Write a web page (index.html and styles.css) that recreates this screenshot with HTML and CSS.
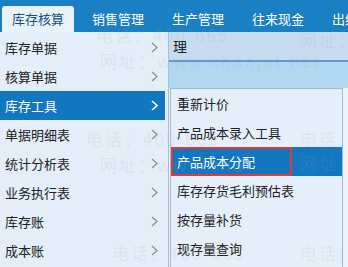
FILE: index.html
```html
<!DOCTYPE html>
<html lang="zh-CN">
<head>
  <meta charset="UTF-8">
  <title>库存核算</title>
  <link rel="stylesheet" href="styles.css">
</head>
<body>

  <div class="app">
    <!-- top navigation -->
    <div class="topbar">
      <div class="tab active">库存核算</div>
      <div class="tab">销售管理</div>
      <div class="tab">生产管理</div>
      <div class="tab">往来现金</div>
      <div class="tab">出纳管理</div>
    </div>

    <div class="main">
      <ul class="menu">
        <li>库存单据<svg class="arrow" viewBox="0 0 7 11"><polyline points="1,1 6,5.5 1,10"/></svg></li>
        <li>核算单据<svg class="arrow" viewBox="0 0 7 11"><polyline points="1,1 6,5.5 1,10"/></svg></li>
        <li class="on">库存工具<svg class="arrow" viewBox="0 0 7 11"><polyline points="1,1 6,5.5 1,10"/></svg></li>
        <li>单据明细表<svg class="arrow" viewBox="0 0 7 11"><polyline points="1,1 6,5.5 1,10"/></svg></li>
        <li>统计分析表<svg class="arrow" viewBox="0 0 7 11"><polyline points="1,1 6,5.5 1,10"/></svg></li>
        <li>业务执行表<svg class="arrow" viewBox="0 0 7 11"><polyline points="1,1 6,5.5 1,10"/></svg></li>
        <li>库存账<svg class="arrow" viewBox="0 0 7 11"><polyline points="1,1 6,5.5 1,10"/></svg></li>
        <li>成本账<svg class="arrow" viewBox="0 0 7 11"><polyline points="1,1 6,5.5 1,10"/></svg></li>
      </ul>

      <div class="content">
        <div class="title-band">理</div>
        <div class="sub-band"></div>
        <ul class="submenu">
          <li>重新计价</li>
          <li>产品成本录入工具</li>
          <li class="on"><span class="mark">产品成本分配</span></li>
          <li>库存存货毛利预估表</li>
          <li>按存量补货</li>
          <li>现存量查询</li>
        </ul>
      </div>
    </div>

    <!-- faint watermark over the page -->
    <div class="wm" style="left:96px;top:22px">电话：400-665</div>
    <div class="wm" style="left:100px;top:48px">网址：www.chanjet.net</div>
    <div class="wm" style="left:300px;top:27px">网址：</div>
    <div class="wm" style="left:86px;top:126px">电话：400-665</div>
    <div class="wm" style="left:100px;top:152px">网址：www.cha</div>
    <div class="wm" style="left:300px;top:126px">电话：</div>
    <div class="wm" style="left:300px;top:150px">网址：</div>
    <div class="wm" style="left:112px;top:240px">电话：400-665</div>
    <div class="wm" style="left:300px;top:240px">电话：</div>
  </div>

</body>
</html>
```

FILE: styles.css
```css
body {
  margin: 0;
  font-family: "Noto Sans CJK SC", "Noto Sans", sans-serif;
  font-size: 13px;
  color: #222;
  background: #eef3f8;
}
ul {
  list-style: none;
  margin: 0;
  padding: 0;
}
.app {
  position: relative;
  width: 348px;
  height: 267px;
  overflow: hidden;
}

/* top bar */
.topbar {
  display: flex;
  align-items: flex-end;
  height: 32px;
  padding-left: 2px;
  background: #1b7fc3;
  white-space: nowrap;
}
.tab {
  flex: none;
  width: 72px;
  height: 26px;
  line-height: 26px;
  margin-right: 8px;
  text-align: center;
  font-size: 13px;
  color: #fff;
}
.tab.active {
  background: #e9f2fb;
  color: #1d4f7e;
  border-radius: 3px 3px 0 0;
}

.main {
  display: flex;
  height: 235px;
}

/* left menu */
.menu {
  flex: none;
  width: 165px;
  padding: 1px 3px 0 0;
  background: #e3eef9;
  border-right: 1px solid #a7bfd6;
}
.menu li {
  display: flex;
  align-items: center;
  justify-content: space-between;
  height: 29px;
  padding: 0 7px 0 5px;
}
.menu li.on {
  background: #1377bf;
  color: #fff;
}
.arrow {
  width: 7px;
  height: 11px;
  fill: none;
  stroke: #8c8c8c;
  stroke-width: 1.2;
}
.menu li.on .arrow {
  stroke: #fff;
  stroke-width: 1.6;
}

/* content area */
.content {
  flex: 1;
  display: flex;
  flex-direction: column;
}
.title-band {
  height: 28px;
  line-height: 28px;
  padding-left: 4px;
  font-size: 14px;
  background: #c6dcf0;
  border-bottom: 2px solid #5e9ccf;
}
.sub-band {
  height: 26px;
  background: #b2d7f0;
}
.submenu {
  flex: 1;
  margin: 0 5px 0 1px;
  background: #e5effa;
  border: 1px solid #a3bbd2;
  border-bottom: none;
}
.submenu li {
  height: 29px;
  line-height: 29px;
  padding-left: 6px;
}
.submenu li.on {
  padding-left: 0;
  background: #1377bf;
  color: #fff;
}
.mark {
  display: block;
  box-sizing: border-box;
  width: 121px;
  height: 29px;
  line-height: 25px;
  padding-left: 4px;
  border: 2px solid #e23a3a;
}

/* watermark */
.wm {
  position: absolute;
  font-size: 17px;
  letter-spacing: 2px;
  color: rgba(160, 160, 160, 0.15);
  white-space: nowrap;
  pointer-events: none;
}
```
